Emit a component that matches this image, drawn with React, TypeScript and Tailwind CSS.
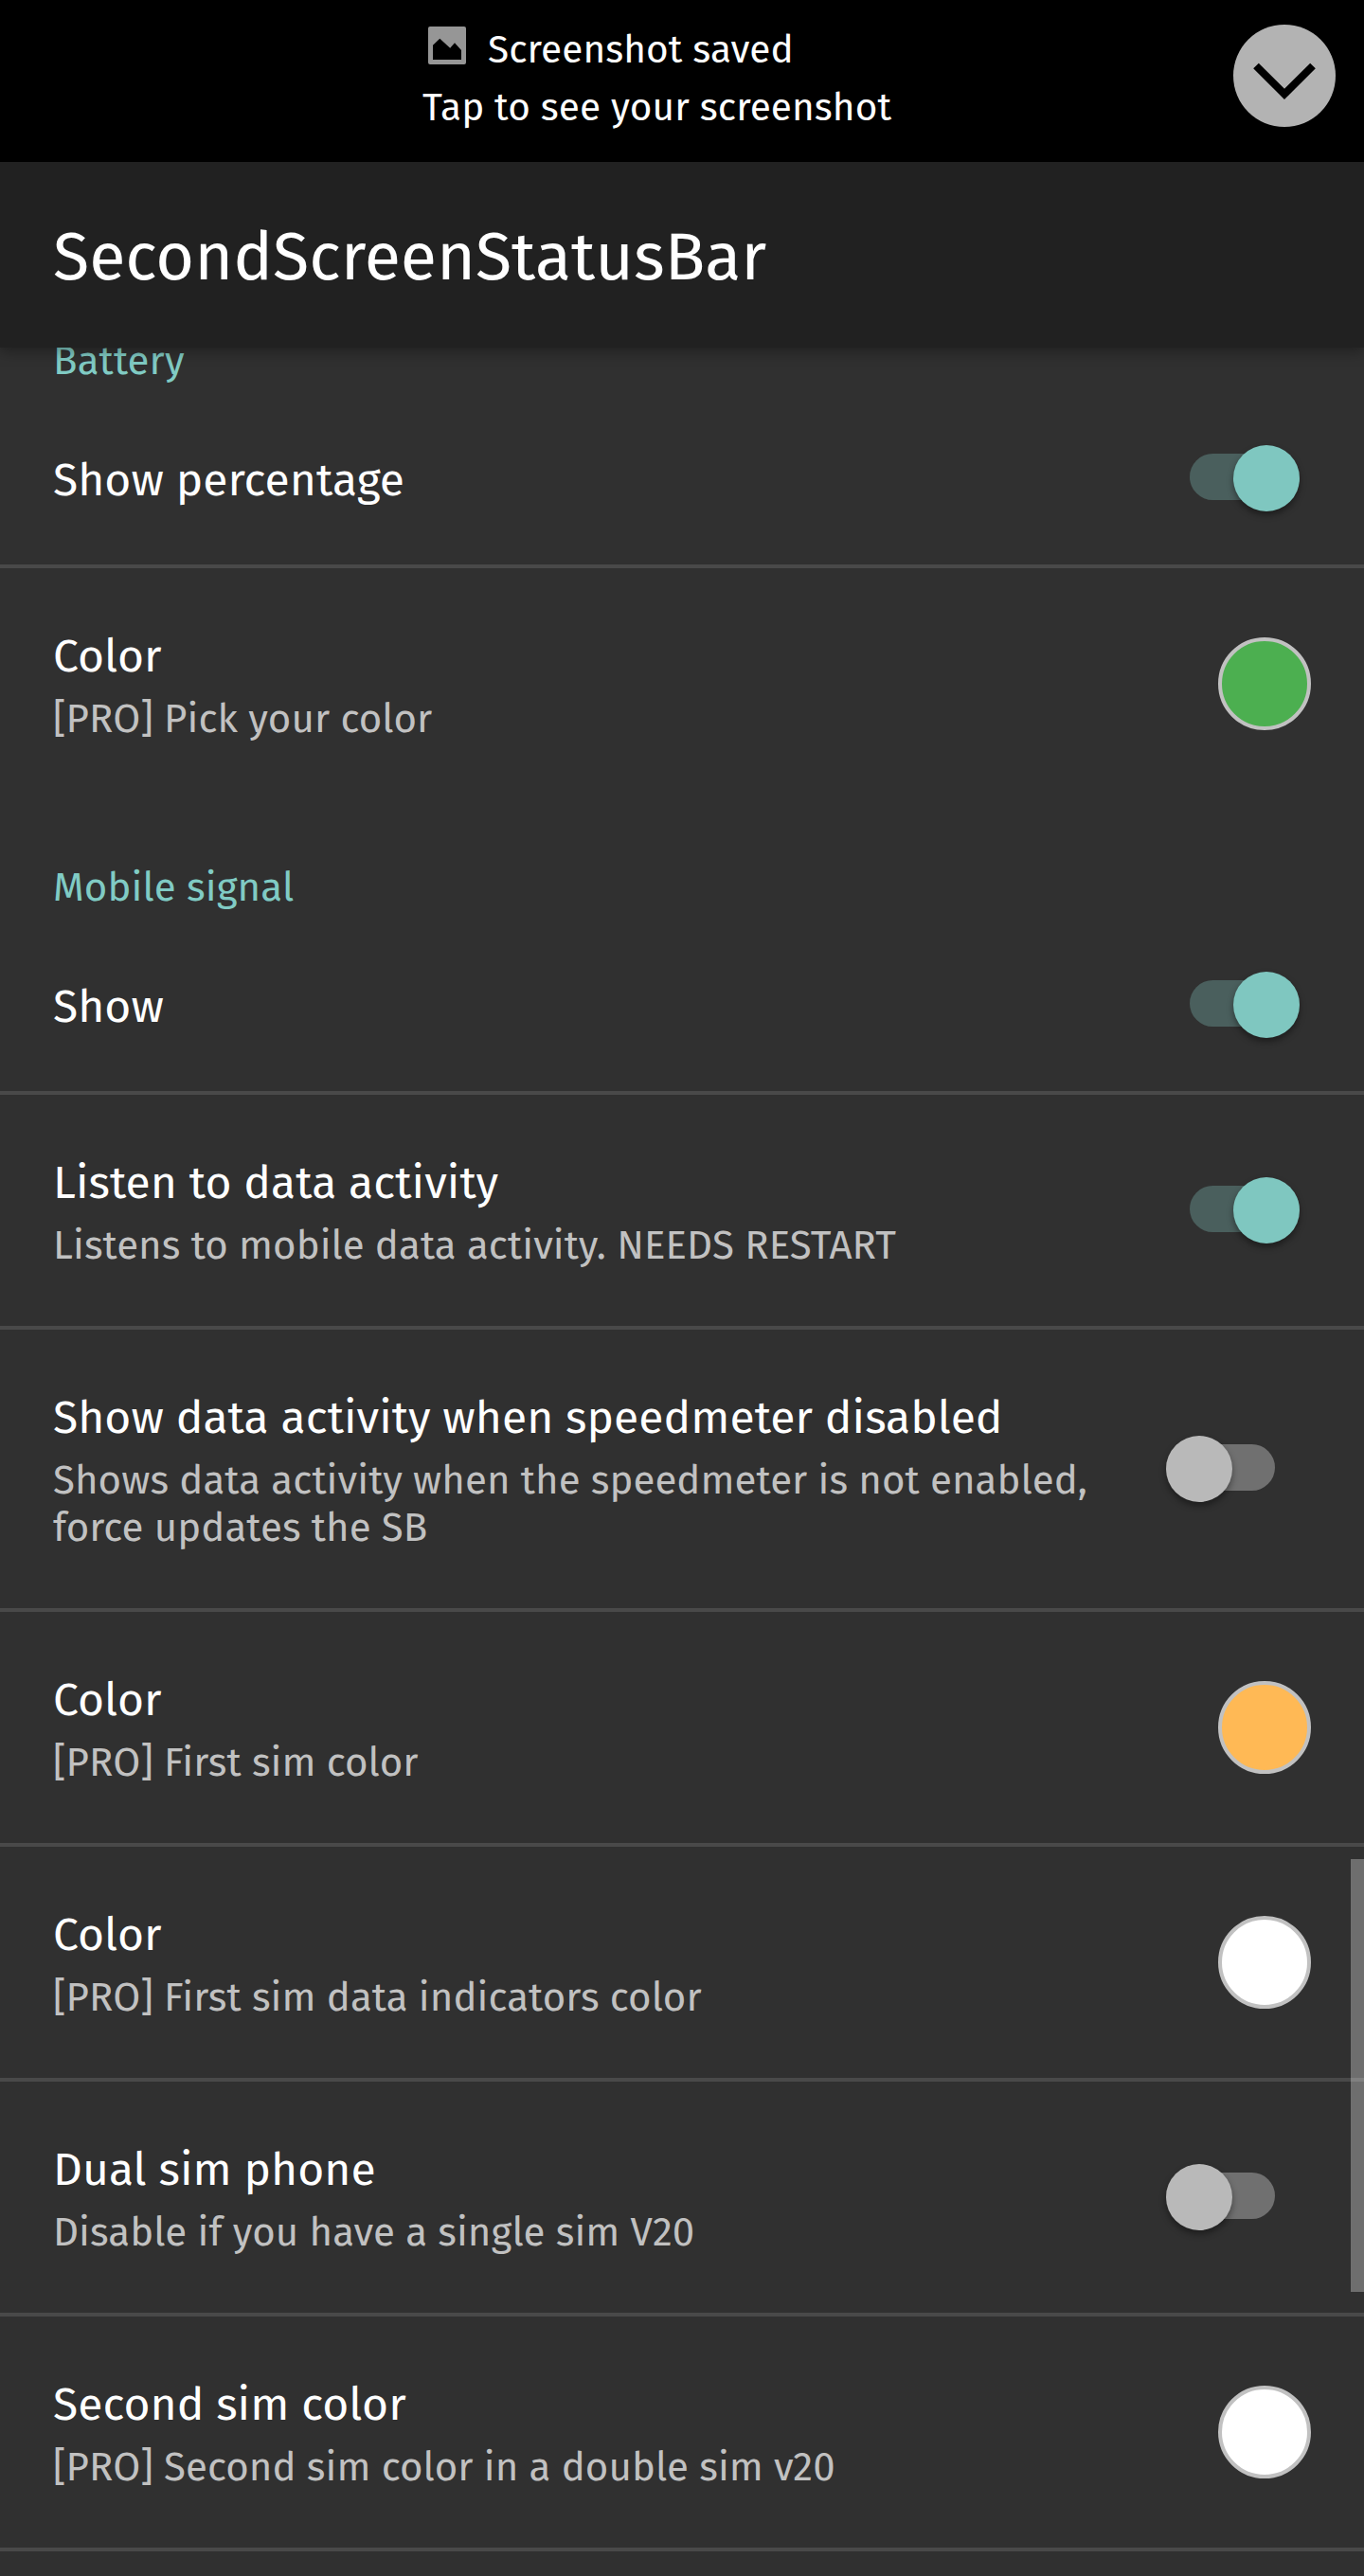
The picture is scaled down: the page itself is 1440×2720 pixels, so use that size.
import React from "react";

type Control =
  | { kind: "switch"; on: boolean }
  | { kind: "swatch"; fill: string };

type Item = { title: string; summary?: string; control: Control };

const sections: { name: string; items: Item[] }[] = [
  {
    name: "Battery",
    items: [
      { title: "Show percentage", control: { kind: "switch", on: true } },
      {
        title: "Color",
        summary: "[PRO] Pick your color",
        control: { kind: "swatch", fill: "bg-[#4caf50]" },
      },
    ],
  },
  {
    name: "Mobile signal",
    items: [
      { title: "Show", control: { kind: "switch", on: true } },
      {
        title: "Listen to data activity",
        summary: "Listens to mobile data activity. NEEDS RESTART",
        control: { kind: "switch", on: true },
      },
      {
        title: "Show data activity when speedmeter disabled",
        summary: "Shows data activity when the speedmeter is not enabled, force updates the SB",
        control: { kind: "switch", on: false },
      },
      {
        title: "Color",
        summary: "[PRO] First sim color",
        control: { kind: "swatch", fill: "bg-[#ffb955]" },
      },
      {
        title: "Color",
        summary: "[PRO] First sim data indicators color",
        control: { kind: "swatch", fill: "bg-white" },
      },
      {
        title: "Dual sim phone",
        summary: "Disable if you have a single sim V20",
        control: { kind: "switch", on: false },
      },
      {
        title: "Second sim color",
        summary: "[PRO] Second sim color in a double sim v20",
        control: { kind: "swatch", fill: "bg-white" },
      },
    ],
  },
];

function Switch({ on }: { on: boolean }) {
  return (
    <div
      role="switch"
      aria-checked={on}
      className={`relative mr-3 flex h-[70px] w-[141px] items-center ${on ? "justify-end" : "justify-start"}`}
    >
      <div
        className={`-mt-[3px] h-[49px] rounded-full ${on ? "w-[116px] bg-[#4a5f5d]" : "w-[115px] bg-[#707070]"}`}
      />
      <div
        className={`absolute top-0 size-[70px] rounded-full shadow-[0_4px_7px_rgba(0,0,0,0.4)] ${
          on ? "right-0 bg-[#7fc7c0]" : "left-0 bg-[#b9b9b9]"
        }`}
      />
    </div>
  );
}

function Swatch({ fill }: { fill: string }) {
  return <div className={`size-[98px] rounded-full border-4 border-[#c1c1c1] ${fill}`} />;
}

function Row({ item }: { item: Item }) {
  return (
    <div className="flex items-center gap-8 pr-14 pl-14">
      <div className="flex-1 pt-16 pb-[60px]">
        <div className="text-[48px] leading-[58px] tracking-[0.04px] text-white">{item.title}</div>
        {item.summary && (
          <div className="mt-3 text-[42px] leading-[50px] tracking-[0.06px] text-[#c1c1c1]">
            {item.summary}
          </div>
        )}
      </div>
      {item.control.kind === "switch" ? (
        <Switch on={item.control.on} />
      ) : (
        <Swatch fill={item.control.fill} />
      )}
    </div>
  );
}

function Notification() {
  return (
    <div className="flex h-[171px] justify-between bg-black pr-[30px] pl-[446px] text-[40.5px] leading-[61px] tracking-[0.09px] text-white">
      <div className="pt-[22px]">
        <div className="flex items-start">
          <svg className="mt-1.5 ml-1.5 h-10 w-10" viewBox="0 0 40 40">
            <path
              fillRule="evenodd"
              fill="#969696"
              d="M2 0H38Q40 0 40 2V38Q40 40 38 40H2Q0 40 0 38V2Q0 0 2 0ZM5 35H35V25L28 17.3L23.2 22.7L12.3 12.7L5 19.7Z"
            />
          </svg>
          <span className="ml-[23px]">Screenshot saved</span>
        </div>
        <div>Tap to see your screenshot</div>
      </div>
      <svg className="mt-[26px] size-[108px]" viewBox="0 0 108 108">
        <circle cx="54" cy="54" r="54" fill="#b3b3b3" />
        <path d="M24 43.5L54 73.4L84 43.5" fill="none" stroke="#000" strokeWidth="8" />
      </svg>
    </div>
  );
}

export default function App() {
  return (
    <div className="flex h-[2720px] w-[1440px] flex-col overflow-hidden bg-[#303030] font-['Fira_Sans','Noto_Sans',sans-serif]">
      <Notification />
      <div className="z-10 h-[196px] bg-[#212121] pt-[59px] pl-14 text-[70px] leading-[84px] text-white shadow-[0_4px_14px_rgba(0,0,0,0.35)]">
        SecondScreenStatusBar
      </div>
      <div className="relative h-[2353px] overflow-hidden">
        <div className="-mt-[79px]">
          {sections.map((section) => (
            <section key={section.name}>
              <div className="pt-[68px] pb-2 pl-14 text-[42px] leading-[50px] tracking-[0.12px] text-[#80cbc4]">
                {section.name}
              </div>
              <div className="divide-y-4 divide-[#494949]">
                {section.items.map((item, i) => (
                  <Row key={i} item={item} />
                ))}
              </div>
            </section>
          ))}
          <div className="h-1 bg-[#494949]" />
        </div>
        <div className="absolute top-[1596px] right-0 h-[457px] w-3.5 bg-white/30" />
      </div>
    </div>
  );
}
